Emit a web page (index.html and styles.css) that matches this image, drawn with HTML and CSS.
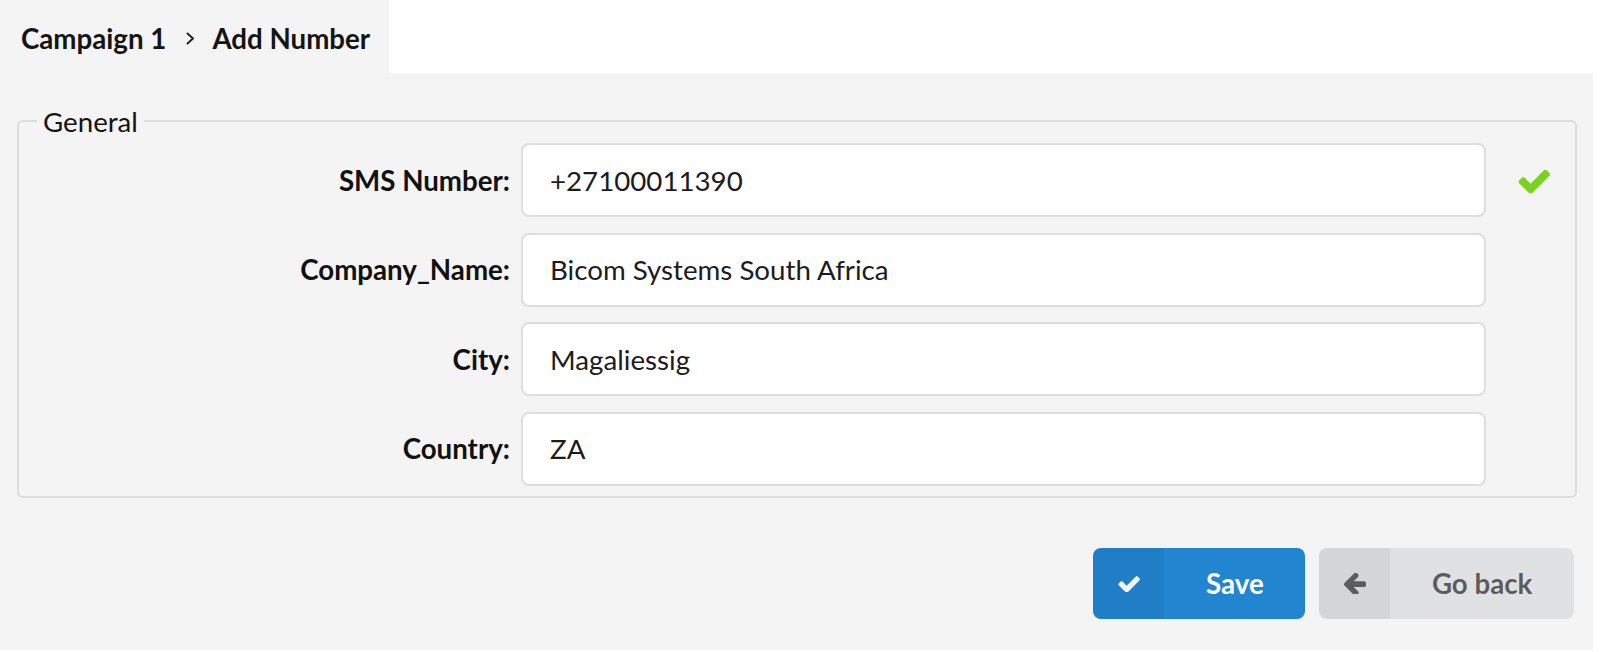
FILE: index.html
```html
<!DOCTYPE html>
<html lang="en">
<head>
<meta charset="utf-8">
<title>Add Number</title>
<link rel="stylesheet" href="styles.css">
</head>
<body>
<div class="tabs">
  <div class="tab">
    <span class="crumb">Campaign 1</span>
    <svg class="divider" viewBox="0 0 9 13" width="9" height="13"><polyline points="1.5,1.5 7,6.5 1.5,11.5" fill="none" stroke="#222" stroke-width="2" stroke-linecap="round" stroke-linejoin="round"/></svg>
    <span class="crumb">Add Number</span>
  </div>
</div>
<div class="panel">
  <fieldset class="group">
    <legend class="legend">General</legend>
    <div class="row">
      <label class="label" for="f1">SMS Number:</label>
      <input class="input" id="f1" type="text" value="+27100011390">
      <svg class="valid" viewBox="93 270 1578 1188" width="32" height="25"><path fill="#79d21b" d="M1671 566q0 40-28 68l-724 724-136 136q-28 28-68 28t-68-28l-136-136-362-362q-28-28-28-68t28-68l136-136q28-28 68-28t68 28l294 295 656-657q28-28 68-28t68 28l136 136q28 28 28 68z"/></svg>
    </div>
    <div class="row">
      <label class="label" for="f2">Company_Name:</label>
      <input class="input" id="f2" type="text" value="Bicom Systems South Africa">
    </div>
    <div class="row">
      <label class="label" for="f3">City:</label>
      <input class="input" id="f3" type="text" value="Magaliessig">
    </div>
    <div class="row">
      <label class="label" for="f4">Country:</label>
      <input class="input" id="f4" type="text" value="ZA">
    </div>
  </fieldset>
  <div class="actions">
    <button class="btn btn-primary" type="button">
      <span class="btn-icon"><svg viewBox="93 270 1578 1188" width="22" height="17"><path fill="#eef4fb" d="M1671 566q0 40-28 68l-724 724-136 136q-28 28-68 28t-68-28l-136-136-362-362q-28-28-28-68t28-68l136-136q28-28 68-28t68 28l294 295 656-657q28-28 68-28t68 28l136 136q28 28 28 68z"/></svg></span>
      <span class="btn-text">Save</span>
    </button>
    <button class="btn btn-default" type="button">
      <span class="btn-icon"><svg viewBox="128 218 1536 1384" width="23" height="21"><path fill="#5c5c5c" d="M1664 896v128q0 53-32.5 90.5t-84.5 37.5h-704l293 294q38 36 38 90t-38 90l-75 76q-37 37-90 37-52 0-91-37l-651-652q-37-37-37-90 0-52 37-91l651-650q38-38 91-38 52 0 90 38l75 74q38 38 38 91t-38 91l-293 293h704q52 0 84.5 37.5t32.5 90.5z"/></svg></span>
      <span class="btn-text">Go back</span>
    </button>
  </div>
</div>
</body>
</html>
```
FILE: styles.css
```css
* { box-sizing: border-box; }
html, body { margin: 0; padding: 0; }
body {
  background: #ffffff;
  font-family: Lato, "Noto Sans", "Liberation Sans", sans-serif;
  font-size: 27.7px;
  color: rgba(0,0,0,0.87);
}
.tabs { display: flex; }
.tab {
  width: 389px;
  height: 73px;
  background: #f4f4f4;
  display: flex;
  align-items: center;
  padding: 3px 0 0 21px;
  font-weight: 700;
  color: #141414;
}
.divider { margin: 0 17px 0 20px; }
.panel {
  width: 1593px;
  height: 577px;
  background: #f4f4f4;
  padding: 31.5px 16px 0 17px;
}
.group {
  margin: 0;
  border: 2px solid #dcdcdc;
  border-radius: 6px;
  padding: 5.5px 0 10px 0;
  min-width: 0;
}
.legend {
  margin-left: 18px;
  padding: 0 6px;
  line-height: 33px;
  font-weight: 400;
  color: #141414;
}
.row {
  display: flex;
  align-items: center;
  margin-bottom: 15.6px;
}
.row:last-child { margin-bottom: 0; }
.label {
  width: 491px;
  margin-right: 11px;
  text-align: right;
  font-weight: 700;
  font-size: 27.7px;
  color: #111;
}
.input {
  width: 965px;
  height: 74px;
  border: 2px solid #dedede;
  border-radius: 8px;
  background: #fff;
  padding: 0 27px;
  font-family: inherit;
  font-size: 27.7px;
  color: #1c1c1c;
  outline: none;
}
.valid { margin-left: 32px; }
.actions {
  display: flex;
  justify-content: flex-end;
  gap: 14px;
  margin-top: 50px;
  padding-right: 3px;
}
.btn {
  display: flex;
  align-items: stretch;
  height: 71px;
  padding: 0;
  border: none;
  border-radius: 8px;
  overflow: hidden;
  font-family: inherit;
  font-size: 27.7px;
  font-weight: 700;
  cursor: pointer;
}
.btn-icon {
  width: 71px;
  display: flex;
  align-items: center;
  justify-content: center;
  background: rgba(0,0,0,0.05);
}
.btn-text {
  display: flex;
  align-items: center;
  padding: 0 41.6px;
}
.btn-primary { background: #2185d0; color: #fff; }
.btn-default { background: #e0e1e2; color: rgba(0,0,0,0.6); }
```
